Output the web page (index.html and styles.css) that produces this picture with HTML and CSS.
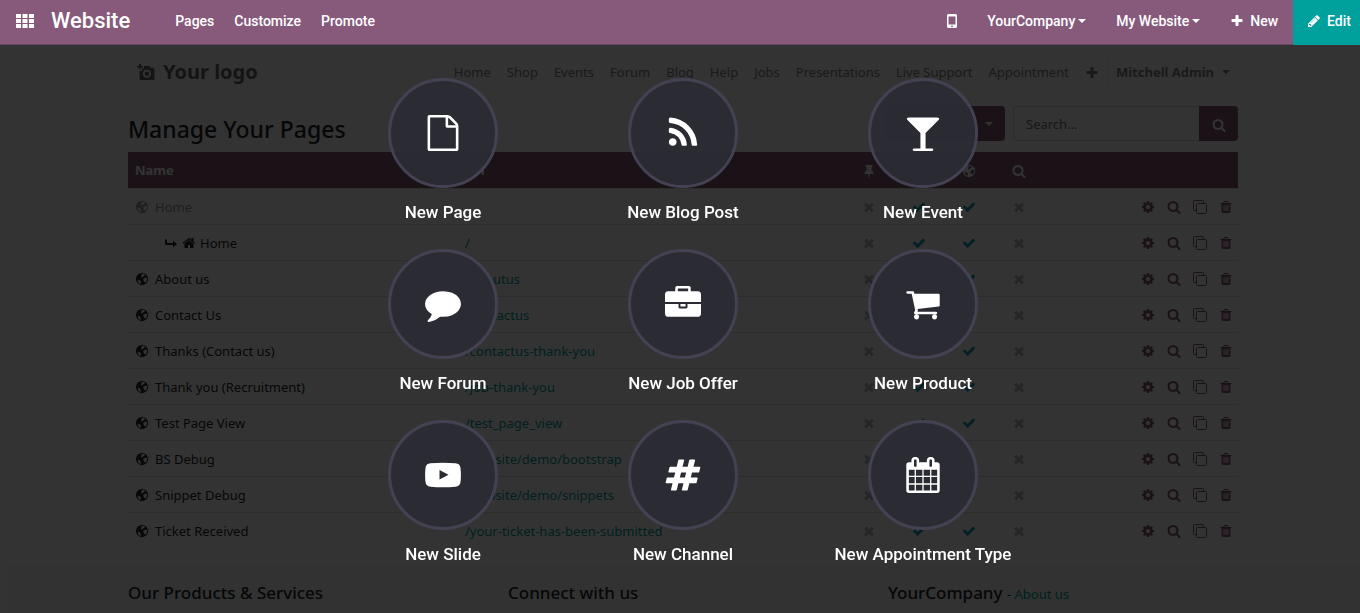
FILE: index.html
```html
<!DOCTYPE html>
<html lang="en">
<head>
    <meta charset="UTF-8">
    <meta name="viewport" content="width=device-width, initial-scale=1">
    <title>Manage Your Pages | Website</title>
    <link rel="stylesheet" href="styles.css">
</head>
<body>
    <!-- icon sprite -->
    <svg class="sprite" aria-hidden="true">
        <symbol id="i-globe" viewBox="0 0 24 24"><path fill-rule="evenodd" d="M12 1.500a10.500 10.500 0 1 0 0 21a10.500 10.500 0 0 0 0-21zM11 4l4-.5 2 1.500-1 2-3 1-1.500 2-1.500-1 1-2.500zM14 12l4-2.500 3 1-.5 4-3 4-2.500-2.500zM4.500 13l4 1.500 2 2.500-1.500 3.500-3-2z"/></symbol>
        <symbol id="i-search" viewBox="0 0 1792 1792"><path d="M1216 832q0-185-131.500-316.500t-316.500-131.500-316.500 131.500-131.500 316.500 131.500 316.500 316.500 131.500 316.500-131.500 131.500-316.500zm512 832q0 52-38 90t-90 38q-54 0-90-38l-343-342q-179 124-399 124-143 0-273.500-55.500t-225-150-150-225-55.500-273.500 55.500-273.500 150-225 225-150 273.500-55.500 273.500 55.500 225 150 150 225 55.500 273.500q0 220-124 399l343 343q37 37 37 90z"/></symbol>
        <symbol id="i-check" viewBox="0 0 1792 1792"><path d="M1671 566q0 40-28 68l-724 724-136 136q-28 28-68 28t-68-28l-136-136-362-362q-28-28-28-68t28-68l136-136q28-28 68-28t68 28l294 295 656-657q28-28 68-28t68 28l136 136q28 28 28 68z"/></symbol>
        <symbol id="i-times" viewBox="0 0 1792 1792"><path d="M1490 1322q0 40-28 68l-136 136q-28 28-68 28t-68-28l-294-294-294 294q-28 28-68 28t-68-28l-136-136q-28-28-28-68t28-68l294-294-294-294q-28-28-28-68t28-68l136-136q28-28 68-28t68 28l294 294 294-294q28-28 68-28t68 28l136 136q28 28 28 68t-28 68l-294 294 294 294q28 28 28 68z"/></symbol>
        <symbol id="i-cog" viewBox="0 0 1792 1792"><path d="M1152 896q0-106-75-181t-181-75-181 75-75 181 75 181 181 75 181-75 75-181zm512-109v222q0 12-8 23t-20 13l-185 28q-19 54-39 91 35 50 107 138 10 12 10 25t-9 23q-27 37-99 108t-94 71q-12 0-26-9l-138-108q-44 23-91 38-16 136-29 186-7 28-36 28h-222q-14 0-24.500-8.500t-11.500-21.500l-28-184q-49-16-90-37l-141 107q-10 9-25 9-14 0-25-11-126-114-165-168-7-10-7-23 0-12 8-23 15-21 51-66.500t54-70.500q-27-50-41-99l-183-27q-13-2-21-12.500t-8-23.500v-222q0-12 8-23t19-13l186-28q14-46 39-92-40-57-107-138-10-12-10-24 0-10 9-23 26-36 98.500-107.500t94.500-71.500q13 0 26 10l138 107q44-23 91-38 16-136 29-186 7-28 36-28h222q14 0 24.500 8.500t11.500 21.500l28 184q49 16 90 37l142-107q9-9 24-9 13 0 25 10 129 119 165 170 7 8 7 22 0 12-8 23-15 21-51 66.500t-54 70.500q26 50 41 98l183 28q13 2 21 12.500t8 23.500z"/></symbol>
        <symbol id="i-clone" viewBox="0 0 14 14"><path fill="none" stroke="currentColor" d="M3.500 10.500h-2a1 1 0 0 1-1-1v-8a1 1 0 0 1 1-1h8a1 1 0 0 1 1 1v2M4.500 3.500h8a1 1 0 0 1 1 1v8a1 1 0 0 1-1 1h-8a1 1 0 0 1-1-1v-8a1 1 0 0 1 1-1z"/></symbol>
        <symbol id="i-trash" viewBox="0 0 1792 1792"><path d="M704 1376v-704q0-14-9-23t-23-9h-64q-14 0-23 9t-9 23v704q0 14 9 23t23 9h64q14 0 23-9t9-23zm256 0v-704q0-14-9-23t-23-9h-64q-14 0-23 9t-9 23v704q0 14 9 23t23 9h64q14 0 23-9t9-23zm256 0v-704q0-14-9-23t-23-9h-64q-14 0-23 9t-9 23v704q0 14 9 23t23 9h64q14 0 23-9t9-23zm-544-992h448l-48-117q-7-9-17-11h-317q-10 2-17 11zm928 32v64q0 14-9 23t-23 9h-96v948q0 83-47 143.500t-113 60.500h-832q-66 0-113-58.500t-47-141.500v-952h-96q-14 0-23-9t-9-23v-64q0-14 9-23t23-9h309l70-167q15-37 54-63t79-26h320q40 0 79 26t54 63l70 167h309q14 0 23 9t9 23z"/></symbol>
        <symbol id="i-pin" viewBox="0 0 1792 1792"><path d="M800 864v-448q0-14-9-23t-23-9-23 9-9 23v448q0 14 9 23t23 9 23-9 9-23zm672 352q0 26-19 45t-45 19h-429l-51 483q-2 12-10.500 20.500t-20.500 8.500h-1q-27 0-32-27l-76-485h-404q-26 0-45-19t-19-45q0-123 78.500-221.500t177.500-98.500v-512q-52 0-90-38t-38-90 38-90 90-38h640q52 0 90 38t38 90-38 90-90 38v512q99 0 177.500 98.500t78.500 221.500z"/></symbol>
        <symbol id="i-home" viewBox="0 0 1792 1792"><path d="M1472 992v480q0 26-19 45t-45 19h-384v-384h-256v384h-384q-26 0-45-19t-19-45v-480q0-1 .5-3t.5-3l575-474 575 474q1 2 1 6zm223-69l-62 74q-8 9-21 11h-3q-13 0-21-7l-692-577-692 577q-12 8-24 7-13-2-21-11l-62-74q-8-10-7-23.500t11-21.500l719-599q32-26 76-26t76 26l244 204v-195q0-14 9-23t23-9h192q14 0 23 9t9 23v408l219 182q10 8 11 21.500t-7 23.500z"/></symbol>
        <symbol id="i-child" viewBox="0 0 14 14"><path d="M1 3.500h2V7h6V4.500L13 8 9 11.500V9H2.500Q1 9 1 7.500z"/></symbol>
        <symbol id="i-plus" viewBox="0 0 1792 1792"><path d="M1600 736v192q0 40-28 68t-68 28h-416v416q0 40-28 68t-68 28h-192q-40 0-68-28t-28-68v-416h-416q-40 0-68-28t-28-68v-192q0-40 28-68t68-28h416v-416q0-40 28-68t68-28h192q40 0 68 28t28 68v416h416q40 0 68 28t28 68z"/></symbol>
        <symbol id="i-pencil" viewBox="0 0 1792 1792"><path d="M491 1536l91-91-235-235-91 91v107h128v128h107zm523-928q0-22-22-22-10 0-17 7l-542 542q-7 7-7 17 0 22 22 22 10 0 17-7l542-542q7-7 7-17zm-54-192l416 416-832 832h-416v-416zm683 96q0 53-37 90l-166 166-416-416 166-165q36-38 90-38 53 0 91 38l235 234q37 39 37 91z"/></symbol>
        <symbol id="i-mobile" viewBox="0 0 10 16"><path fill-rule="evenodd" d="M1.500 1h7Q10 1 10 2.500v11Q10 15 8.500 15h-7Q0 15 0 13.500v-11Q0 1 1.500 1zM1.500 3.500v8h7v-8zM5 12.400a.9.900 0 1 0 0 1.800a.9.900 0 0 0 0-1.800z"/></symbol>
        <symbol id="i-apps" viewBox="0 0 18 14"><path d="M0 0h5v4H0zM6.500 0h5v4h-5zM13 0h5v4h-5zM0 5h5v4H0zM6.500 5h5v4h-5zM13 5h5v4h-5zM0 10h5v4H0zM6.500 10h5v4h-5zM13 10h5v4h-5z"/></symbol>
        <symbol id="i-camera" viewBox="0 0 18 18"><path fill-rule="evenodd" d="M2 1h2v2h2v1.500H4v2H2.500v-2H0V3h2zM7 3h6l1 2h2q1.500 0 1.500 1.500v9Q17.500 17 16 17H4q-1.500 0-1.500-1.500V8H5V5.500h2zM10 6.800a4 4 0 1 0 0 8a4 4 0 0 0 0-8zM10 8.500a2.300 2.300 0 1 1 0 4.600a2.300 2.300 0 0 1 0-4.600z"/></symbol>
        <symbol id="i-file" viewBox="0 0 1792 1792"><path d="M1596 380q28 28 48 76t20 88v1152q0 40-28 68t-68 28h-1344q-40 0-68-28t-28-68v-1600q0-40 28-68t68-28h896q40 0 88 20t76 48zm-444-244v376h376q-10-29-22-41l-313-313q-12-12-41-22zm384 1528v-1024h-416q-40 0-68-28t-28-68v-416h-768v1536h1280z"/></symbol>
        <symbol id="i-rss" viewBox="-192 0 1792 1792"><path d="M384 1344q0 80-56 136t-136 56-136-56-56-136 56-136 136-56 136 56 56 136zm512 123q2 28-17 48-18 21-47 21h-135q-25 0-43-16.500t-20-41.500q-22-229-184.500-391.500t-391.500-184.500q-25-2-41.500-20t-16.500-43v-135q0-29 21-47 17-17 43-17h5q160 13 306 80.500t259 181.500q114 113 181.500 259t80.500 306zm512 2q2 27-18 47-18 20-46 20h-143q-26 0-44.500-17.500t-19.500-42.500q-12-215-101-408.500t-231.500-336-336-231.500-408.500-102q-25-1-42.500-19.500t-17.500-43.500v-143q0-28 20-46 18-18 44-18h3q262 13 501.500 120t425.500 294q187 186 294 425.500t120 501.500z"/></symbol>
        <symbol id="i-glass" viewBox="0 0 1792 1792"><path d="M1699 186q0 35-43 78l-632 632v768h320q26 0 45 19t19 45-19 45-45 19h-896q-26 0-45-19t-19-45 19-45 45-19h320v-768l-632-632q-43-43-43-78 0-23 18-36.500t38-17.500 43-4h1408q23 0 43 4t38 17.500 18 36.500z"/></symbol>
        <symbol id="i-comment" viewBox="0 0 1792 1792"><path d="M1792 896q0 174-120 321.500t-326 233-450 85.500q-70 0-145-8-198 175-460 242-49 14-114 22-17 2-30.500-9t-17.500-29v-1q-3-4-.5-12t2-10 4.500-9.500l6-9 7-8.500 8-9q7-8 31-34.500t34.500-38 31-39.500 32.500-51 27-59 26-76q-157-89-247.500-220t-90.500-281q0-130 71-248.500t191-204.500 286-136.500 348-50.500q244 0 450 85.500t326 233 120 321.500z"/></symbol>
        <symbol id="i-briefcase" viewBox="0 0 1792 1792"><path d="M640 256h512v-128h-512v128zm1152 640v480q0 66-47 113t-113 47h-1472q-66 0-113-47t-47-113v-480h672v160q0 26 19 45t45 19h320q26 0 45-19t19-45v-160h672zm-768 0v128h-256v-128h256zm768-480v384h-1792v-384q0-66 47-113t113-47h352v-160q0-40 28-68t68-28h576q40 0 68 28t28 68v160h352q66 0 113 47t47 113z"/></symbol>
        <symbol id="i-cart" viewBox="0 0 1792 1792"><path d="M704 1536q0 52-38 90t-90 38-90-38-38-90 38-90 90-38 90 38 38 90zm896 0q0 52-38 90t-90 38-90-38-38-90 38-90 90-38 90 38 38 90zm128-1088v512q0 24-16.500 42.500t-40.500 21.500l-1044 122q13 60 13 70 0 16-24 64h920q26 0 45 19t19 45-19 45-45 19h-1024q-26 0-45-19t-19-45q0-11 8-31.500t16-36 21.500-40 15.500-29.500l-177-823h-204q-26 0-45-19t-19-45 19-45 45-19h256q16 0 28.500 6.500t19.500 15.500 13 24.500 8 26 5.500 29.500 4.500 26h1201q26 0 45 19t19 45z"/></symbol>
        <symbol id="i-slide" viewBox="0 0 36 36"><path fill-rule="evenodd" d="M5.500 6.300Q18 5.300 30.500 6.300 35 6.600 35.500 11 36.300 18 35.500 25 35 29.400 30.500 29.700 18 30.700 5.500 29.700 1 29.400.5 25-.3 18 .5 11 1 6.600 5.500 6.300zM14.500 13v9.600l9-4.800z"/></symbol>
        <symbol id="i-hash" viewBox="0 0 1792 1792"><path d="M991 1024l64-256h-254l-64 256h254zm768-504l-56 224q-7 24-31 24h-327l-64 256h311q15 0 25 12 10 14 6 28l-56 224q-5 24-31 24h-327l-81 328q-7 24-31 24h-224q-16 0-26-12-9-12-6-28l78-312h-254l-81 328q-7 24-31 24h-225q-15 0-25-12-9-12-6-28l78-312h-311q-15 0-25-12-9-12-6-28l56-224q7-24 31-24h327l64-256h-311q-15 0-25-12-10-14-6-28l56-224q5-24 31-24h327l81-328q7-24 32-24h224q15 0 25 12 9 12 6 28l-78 312h254l81-328q7-24 32-24h224q15 0 25 12 9 12 6 28l-78 312h311q15 0 25 12 9 12 6 28z"/></symbol>
        <symbol id="i-calendar" viewBox="0 0 1792 1792"><path d="M192 1664h288v-288h-288v288zm352 0h320v-288h-320v288zm-352-352h288v-320h-288v320zm352 0h320v-320h-320v320zm-352-384h288v-288h-288v288zm736 736h320v-288h-320v288zm-384-736h320v-288h-320v288zm768 736h288v-288h-288v288zm-384-352h320v-320h-320v320zm-352-864v-288q0-13-9.500-22.500t-22.500-9.500h-64q-13 0-22.500 9.500t-9.500 22.500v288q0 13 9.500 22.500t22.500 9.500h64q13 0 22.500-9.500t9.500-22.500zm736 864h288v-320h-288v320zm-384-384h320v-288h-320v288zm384 0h288v-288h-288v288zm32-480v-288q0-13-9.500-22.500t-22.500-9.500h-64q-13 0-22.500 9.500t-9.500 22.500v288q0 13 9.500 22.500t22.500 9.500h64q13 0 22.500-9.500t9.500-22.500zm384-64v1280q0 52-38 90t-90 38h-1408q-52 0-90-38t-38-90v-1280q0-52 38-90t90-38h128v-96q0-66 47-113t113-47h64q66 0 113 47t47 113v96h384v-96q0-66 47-113t113-47h64q66 0 113 47t47 113v96h128q52 0 90 38t38 90z"/></symbol>
    </svg>

    <nav class="main-navbar">
        <a class="apps" href="#" aria-label="Applications"><svg><use href="#i-apps"/></svg></a>
        <a class="brand" href="#">Website</a>
        <div class="menu">
            <a href="#">Pages</a>
            <a href="#">Customize</a>
            <a href="#">Promote</a>
        </div>
        <div class="systray">
            <a class="mobile" href="#" aria-label="Mobile preview"><svg><use href="#i-mobile"/></svg></a>
            <button type="button">YourCompany<span class="caret"></span></button>
            <button type="button">My Website<span class="caret"></span></button>
            <button type="button"><svg class="icon"><use href="#i-plus"/></svg>New</button>
            <button type="button" class="edit"><svg class="icon"><use href="#i-pencil"/></svg>Edit</button>
        </div>
    </nav>

    <div class="wrapper">
        <header class="site-header">
            <div class="container">
                <a class="logo" href="#"><svg><use href="#i-camera"/></svg>Your logo</a>
                <nav class="site-menu">
                    <a href="#">Home</a>
                    <a href="#">Shop</a>
                    <a href="#">Events</a>
                    <a href="#">Forum</a>
                    <a href="#">Blog</a>
                    <a href="#">Help</a>
                    <a href="#">Jobs</a>
                    <a href="#">Presentations</a>
                    <a href="#">Live Support</a>
                    <a href="#">Appointment</a>
                    <a href="#" aria-label="Add menu"><svg class="icon"><use href="#i-plus"/></svg></a>
                    <a class="user" href="#">Mitchell Admin<span class="caret"></span></a>
                </nav>
            </div>
        </header>

        <main class="container">
            <div class="toolbar">
                <h1>Manage Your Pages</h1>
                <button type="button" class="filter" aria-label="Filter by website"><span class="caret"></span></button>
                <form class="search">
                    <input type="text" placeholder="Search..." aria-label="Search">
                    <button type="submit" aria-label="Search"><svg class="icon"><use href="#i-search"/></svg></button>
                </form>
            </div>
            <table class="pages">
                <colgroup>
                    <col class="col-name">
                    <col class="col-url">
                    <col class="col-flag">
                    <col class="col-flag">
                    <col class="col-flag">
                    <col class="col-flag">
                    <col>
                </colgroup>
                <thead>
                    <tr>
                        <th>Name</th>
                        <th>Url</th>
                        <th class="flag"><svg class="icon"><use href="#i-pin"/></svg></th>
                        <th class="flag"><svg class="icon"><use href="#i-check"/></svg></th>
                        <th class="flag"><svg class="icon"><use href="#i-globe"/></svg></th>
                        <th class="flag"><svg class="icon"><use href="#i-search"/></svg></th>
                        <th></th>
                    </tr>
                </thead>
                <tbody id="page-list"></tbody>
            </table>
        </main>

        <footer class="site-footer">
            <div class="container">
                <h5>Our Products &amp; Services</h5>
                <h5>Connect with us</h5>
                <h5>YourCompany <small>- <a href="#">About us</a></small></h5>
            </div>
        </footer>
    </div>

    <div class="new-content">
        <div class="new-grid">
            <a href="#"><span class="circle"><svg><use href="#i-file"/></svg></span>New Page</a>
            <a href="#"><span class="circle"><svg><use href="#i-rss"/></svg></span>New Blog Post</a>
            <a href="#"><span class="circle"><svg><use href="#i-glass"/></svg></span>New Event</a>
            <a href="#"><span class="circle"><svg><use href="#i-comment"/></svg></span>New Forum</a>
            <a href="#"><span class="circle"><svg><use href="#i-briefcase"/></svg></span>New Job Offer</a>
            <a href="#"><span class="circle"><svg><use href="#i-cart"/></svg></span>New Product</a>
            <a href="#"><span class="circle"><svg><use href="#i-slide"/></svg></span>New Slide</a>
            <a href="#"><span class="circle"><svg><use href="#i-hash"/></svg></span>New Channel</a>
            <a href="#"><span class="circle"><svg><use href="#i-calendar"/></svg></span>New Appointment Type</a>
        </div>
    </div>

    <script src="script.js"></script>
</body>
</html>
```
FILE: styles.css
```css
* {
    box-sizing: border-box;
}
body {
    margin: 0;
    overflow: hidden;
    font-family: "Noto Sans", "Open Sans", sans-serif;
    font-size: 13px;
    line-height: 20px;
    color: #212529;
    background: #fff;
}
a {
    color: #00a09d;
    text-decoration: none;
}
button, input {
    font: inherit;
    color: inherit;
}
button {
    padding: 0;
    border: none;
    background: none;
    cursor: pointer;
}
svg {
    fill: currentColor;
}
.sprite {
    display: none;
}
.icon {
    width: 14px;
    height: 14px;
    flex: none;
    vertical-align: middle;
}
.caret {
    display: inline-block;
    margin-left: 3px;
    border: 4px solid transparent;
    border-top-color: currentColor;
    border-bottom: 0;
    vertical-align: 3px;
}

/* top bar */
.main-navbar {
    display: flex;
    align-items: stretch;
    height: 45px;
    padding-bottom: 3px;
    font-family: Roboto, sans-serif;
    font-size: 14px;
    font-weight: 500;
    color: #fff;
    background: #875a7b;
    box-shadow: inset 0 -1px #68465f;
}
.main-navbar a,
.main-navbar button {
    display: flex;
    align-items: center;
    color: #fff;
}
.main-navbar .apps {
    padding: 0 17px 0 16px;
}
.apps svg {
    width: 18px;
    height: 14px;
}
.main-navbar .brand {
    font-size: 22px;
}
.menu {
    display: flex;
    gap: 20px;
    margin-left: 45px;
}
.systray {
    display: flex;
    margin-left: auto;
}
.systray a,
.systray button {
    padding: 0 15px;
}
.systray .icon {
    margin-right: 6px;
}
.mobile svg {
    width: 10px;
    height: 16px;
}
.systray .edit {
    height: 45px;
    padding: 0 9px 3px 14px;
    background: #00a09d;
}

/* website page */
.wrapper {
    padding-left: 6px;
}
.container {
    max-width: 1110px;
    margin: 0 auto;
}
.site-header {
    border-bottom: 1px solid #f5f5f5;
}
.site-header .container {
    display: flex;
    align-items: center;
    justify-content: space-between;
    height: 53px;
}
.logo {
    display: flex;
    align-items: center;
    gap: 8px;
    padding-left: 9px;
    font-size: 20px;
    font-weight: 700;
    color: #666;
}
.logo svg {
    width: 18px;
    height: 18px;
}
.site-menu {
    display: flex;
}
.site-menu a {
    padding: 8px;
    color: #808080;
}
.site-menu .user {
    border-left: 1px solid #eee;
    font-weight: 700;
}
.user .caret {
    margin-left: 8px;
}
.toolbar {
    display: flex;
    align-items: center;
    height: 53px;
    padding-bottom: 4px;
    gap: 8px;
}
.toolbar h1 {
    margin: 10px auto 0 0;
    font-size: 23px;
    font-weight: 500;
    line-height: 30px;
}
.filter {
    width: 120px;
    height: 35px;
    padding-right: 12px;
    border-radius: 4px;
    text-align: right;
    color: #fff;
    background: #875a7b;
}
.search {
    display: flex;
    width: 225px;
    height: 35px;
}
.search input {
    flex: 1;
    min-width: 0;
    padding: 0 12px;
    border: 1px solid #ced4da;
    border-right: 0;
    border-radius: 4px 0 0 4px;
    background: #fff;
}
.search input::placeholder {
    color: #6c757d;
}
.search button {
    width: 39px;
    border-radius: 0 4px 4px 0;
    color: #fff;
    background: #875a7b;
}
.pages {
    width: 100%;
    table-layout: fixed;
    border-collapse: collapse;
}
.col-name {
    width: 330px;
}
.col-url {
    width: 386px;
}
.col-flag {
    width: 50px;
}
.pages th,
.pages td {
    height: 36px;
    padding: 0 7px;
    text-align: left;
    border-top: 1px solid #dee2e6;
}
.pages thead {
    color: #fff;
    background: #875a7b;
}
.pages thead th {
    padding-bottom: 2px;
    border-top-color: #875a7b;
}
.pages .flag {
    padding: 0 0 2px;
    text-align: center;
}
.pages .name {
    display: flex;
    align-items: center;
    gap: 6px;
}
.pages .child {
    gap: 4px;
    padding-left: 29px;
}
.pages .muted {
    color: #9a9a9a;
}
.yes {
    color: #17a2b8;
}
.no {
    color: #b5babd;
}
.actions {
    display: flex;
    align-items: center;
    justify-content: flex-end;
    gap: 12px;
    margin-right: -2px;
    color: #875a7b;
}
.actions button {
    display: flex;
}
.site-footer {
    margin-top: 16px;
    padding: 17px 0;
    background: #f8f8f8;
}
.site-footer .container {
    display: grid;
    grid-template-columns: 380px 380px 1fr;
}
.site-footer h5 {
    margin: 0;
    font-size: 17px;
    font-weight: 500;
    line-height: 22px;
}
.site-footer small {
    font-size: 13px;
    font-weight: 400;
}

/* "new" menu, lies over the page */
.new-content {
    position: fixed;
    top: 45px;
    right: 0;
    bottom: 0;
    left: 0;
    padding: 33px 0 0 6px;
    background: rgba(0, 0, 0, 0.8);
}
.new-grid {
    display: grid;
    grid-template-columns: repeat(3, 240px);
    justify-content: center;
    row-gap: 25px;
}
.new-grid a {
    display: flex;
    flex-direction: column;
    align-items: center;
    gap: 12px;
    font-family: Roboto, sans-serif;
    font-size: 17px;
    font-weight: 500;
    line-height: 24px;
    color: #fff;
}
.circle {
    display: flex;
    align-items: center;
    justify-content: center;
    width: 110px;
    height: 110px;
    border: 3px solid #434152;
    border-radius: 50%;
    background: rgba(43, 43, 53, 0.95);
    background-clip: padding-box;
}
.circle svg {
    width: 36px;
    height: 36px;
}
```
FILE: script.js
```js
const pages = [
    { name: 'Home', group: true },
    { name: 'Home', url: '/', child: true },
    { name: 'About us', url: '/aboutus' },
    { name: 'Contact Us', url: '/contactus' },
    { name: 'Thanks (Contact us)', url: '/contactus-thank-you' },
    { name: 'Thank you (Recruitment)', url: '/job-thank-you' },
    { name: 'Test Page View', url: '/test_page_view' },
    { name: 'BS Debug', url: '/website/demo/bootstrap', hidden: true },
    { name: 'Snippet Debug', url: '/website/demo/snippets', hidden: true },
    { name: 'Ticket Received', url: '/your-ticket-has-been-submitted' }
];

function icon(name) {
    return `<svg class="icon"><use href="#i-${name}"/></svg>`;
}

function flag(on) {
    return `<td class="flag ${on ? 'yes' : 'no'}">${icon(on ? 'check' : 'times')}</td>`;
}

function action(name, label) {
    return `<button type="button" aria-label="${label}">${icon(name)}</button>`;
}

function row(page) {
    const icons = page.child ? icon('child') + icon('home') : icon('globe');
    const style = page.child ? 'child' : page.group ? 'muted' : '';
    return `<tr>
        <td><div class="name ${style}">${icons}<span>${page.name}</span></div></td>
        <td>${page.url ? `<a href="#">${page.url}</a>` : ''}</td>
        ${flag(false)}${flag(true)}${flag(!page.hidden)}${flag(false)}
        <td><div class="actions">
            ${action('cog', 'Settings')}${action('search', 'Optimize SEO')}${action('clone', 'Clone')}${action('trash', 'Delete')}
        </div></td>
    </tr>`;
}

document.getElementById('page-list').innerHTML = pages.map(row).join('');
```
